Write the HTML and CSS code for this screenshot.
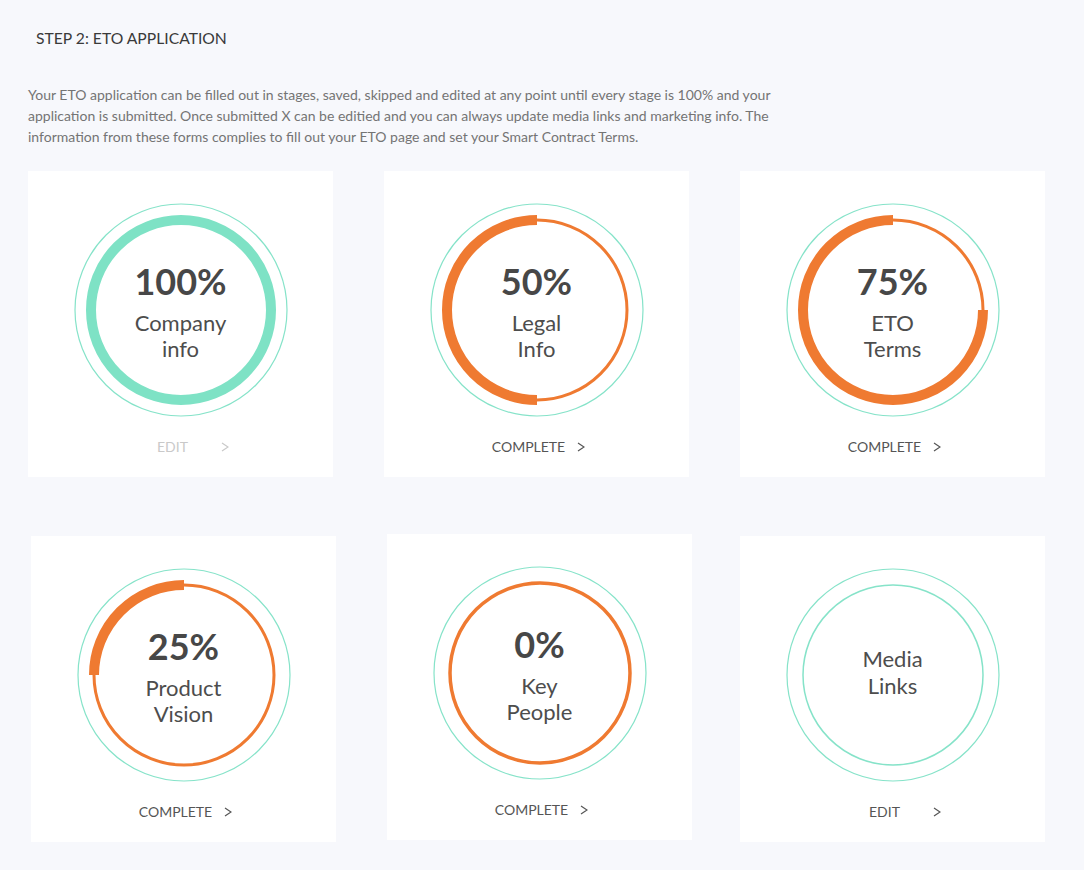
FILE: index.html
```html
<!DOCTYPE html>
<html lang="en">
<head>
<meta charset="utf-8">
<title>Step 2: ETO Application</title>
<link rel="stylesheet" href="styles.css">
</head>
<body>
<main class="page">
  <h1 class="title">STEP 2: ETO APPLICATION</h1>
  <p class="intro">Your ETO application can be filled out in stages, saved, skipped and edited at any point until every stage is 100% and your application is submitted. Once submitted X can be editied and you can always update media links and marketing info. The information from these forms complies to fill out your ETO page and set your Smart Contract Terms.</p>

  <section class="grid">
    <article class="card">
      <div class="dial">
        <svg class="ring" width="214" height="214" viewBox="0 0 214 214">
          <circle class="outer" cx="107" cy="107" r="106"/>
          <circle class="done" cx="107" cy="107" r="90"/>
        </svg>
        <div class="dial-text">
          <div class="pct">100%</div>
          <div class="label">Company<br>info</div>
        </div>
      </div>
      <a class="link link-muted" href="#"><span class="link-label">EDIT</span><svg class="chev" width="8" height="10" viewBox="0 0 8 10"><polyline points="1,1 7,5 1,9"/></svg></a>
    </article>

    <article class="card">
      <div class="dial">
        <svg class="ring" width="214" height="214" viewBox="0 0 214 214">
          <circle class="outer" cx="107" cy="107" r="106"/>
          <circle class="track" cx="107" cy="107" r="90"/>
          <path class="arc" d="M107 17 A90 90 0 0 0 107 197"/>
        </svg>
        <div class="dial-text">
          <div class="pct">50%</div>
          <div class="label">Legal<br>Info</div>
        </div>
      </div>
      <a class="link" href="#"><span class="link-label">COMPLETE</span><svg class="chev" width="8" height="10" viewBox="0 0 8 10"><polyline points="1,1 7,5 1,9"/></svg></a>
    </article>

    <article class="card">
      <div class="dial">
        <svg class="ring" width="214" height="214" viewBox="0 0 214 214">
          <circle class="outer" cx="107" cy="107" r="106"/>
          <circle class="track" cx="107" cy="107" r="90"/>
          <path class="arc" d="M107 17 A90 90 0 1 0 197 107"/>
        </svg>
        <div class="dial-text">
          <div class="pct">75%</div>
          <div class="label">ETO<br>Terms</div>
        </div>
      </div>
      <a class="link" href="#"><span class="link-label">COMPLETE</span><svg class="chev" width="8" height="10" viewBox="0 0 8 10"><polyline points="1,1 7,5 1,9"/></svg></a>
    </article>

    <article class="card card-low">
      <div class="dial">
        <svg class="ring" width="214" height="214" viewBox="0 0 214 214">
          <circle class="outer" cx="107" cy="107" r="106"/>
          <circle class="track" cx="107" cy="107" r="90"/>
          <path class="arc" d="M107 17 A90 90 0 0 0 17 107"/>
        </svg>
        <div class="dial-text">
          <div class="pct">25%</div>
          <div class="label">Product<br>Vision</div>
        </div>
      </div>
      <a class="link" href="#"><span class="link-label">COMPLETE</span><svg class="chev" width="8" height="10" viewBox="0 0 8 10"><polyline points="1,1 7,5 1,9"/></svg></a>
    </article>

    <article class="card card-raised">
      <div class="dial">
        <svg class="ring" width="214" height="214" viewBox="0 0 214 214">
          <circle class="outer" cx="107" cy="107" r="106"/>
          <circle class="track track-zero" cx="107" cy="107" r="90"/>
        </svg>
        <div class="dial-text">
          <div class="pct">0%</div>
          <div class="label">Key<br>People</div>
        </div>
      </div>
      <a class="link" href="#"><span class="link-label">COMPLETE</span><svg class="chev" width="8" height="10" viewBox="0 0 8 10"><polyline points="1,1 7,5 1,9"/></svg></a>
    </article>

    <article class="card">
      <div class="dial">
        <svg class="ring" width="214" height="214" viewBox="0 0 214 214">
          <circle class="outer" cx="107" cy="107" r="106"/>
          <circle class="inner" cx="107" cy="107" r="90"/>
        </svg>
        <div class="dial-text dial-text-plain">
          <div class="label label-plain">Media<br>Links</div>
        </div>
      </div>
      <a class="link" href="#"><span class="link-label">EDIT</span><svg class="chev" width="8" height="10" viewBox="0 0 8 10"><polyline points="1,1 7,5 1,9"/></svg></a>
    </article>
  </section>
</main>
</body>
</html>
```
FILE: styles.css
```css
* {
  box-sizing: border-box;
}

html,
body {
  margin: 0;
  padding: 0;
  background: #f7f8fc;
}

body {
  font-family: Lato, "Open Sans", "Liberation Sans", sans-serif;
  color: #4a4a4a;
}

.page {
  padding: 28px 0 0 28px;
  width: 1084px;
}

.title {
  margin: 0 0 36px 8px;
  font-size: 15.7px;
  line-height: 20px;
  font-weight: 400;
  color: #3a3a3a;
}

.intro {
  margin: 0 0 24px 0;
  width: 760px;
  font-size: 14px;
  line-height: 21px;
  color: #747474;
}

.grid {
  display: grid;
  grid-template-columns: repeat(3, 305px);
  grid-auto-rows: 306px;
  column-gap: 51px;
  row-gap: 59px;
}

.card {
  background: #ffffff;
  display: flex;
  flex-direction: column;
  align-items: center;
  padding-top: 32px;
}

.card-low {
  margin-left: 3px;
  margin-right: -3px;
}

.card-raised {
  margin-top: -2px;
  margin-bottom: 2px;
  margin-left: 3px;
  margin-right: -3px;
}

.dial {
  display: grid;
  width: 214px;
  height: 214px;
}

.ring,
.dial-text {
  grid-area: 1 / 1;
}

.ring {
  display: block;
  fill: none;
}

.outer {
  stroke: #86e3c9;
  stroke-width: 1.2;
}

.inner {
  stroke: #86e3c9;
  stroke-width: 1.5;
}

.done {
  stroke: #7ee2c5;
  stroke-width: 10;
}

.track {
  stroke: #ef7a31;
  stroke-width: 3;
}

.track-zero {
  stroke-width: 3.5;
}

.arc {
  stroke: #ef7a31;
  stroke-width: 10;
  stroke-linecap: butt;
}

.dial-text {
  align-self: center;
  justify-self: center;
  text-align: center;
  margin-top: 2px;
}

.dial-text-plain {
  margin-top: 0;
  margin-bottom: 6px;
}

.pct {
  font-size: 36px;
  line-height: 40px;
  font-weight: 700;
  color: #474747;
}

.label {
  margin-top: 9px;
  font-size: 22px;
  line-height: 26px;
  color: #4d4d4d;
}

.label-plain {
  margin-top: 0;
  line-height: 27px;
}

.link {
  display: flex;
  align-items: center;
  gap: 8px;
  margin-top: 21px;
  font-size: 14px;
  line-height: 18px;
  color: #555555;
  text-decoration: none;
}

.link-label {
  width: 80px;
  text-align: center;
}

.chev {
  display: block;
  fill: none;
  stroke: #555555;
  stroke-width: 1.2;
}

.link-muted {
  color: #c9c9c9;
}

.link-muted .chev {
  stroke: #c9c9c9;
}
```
